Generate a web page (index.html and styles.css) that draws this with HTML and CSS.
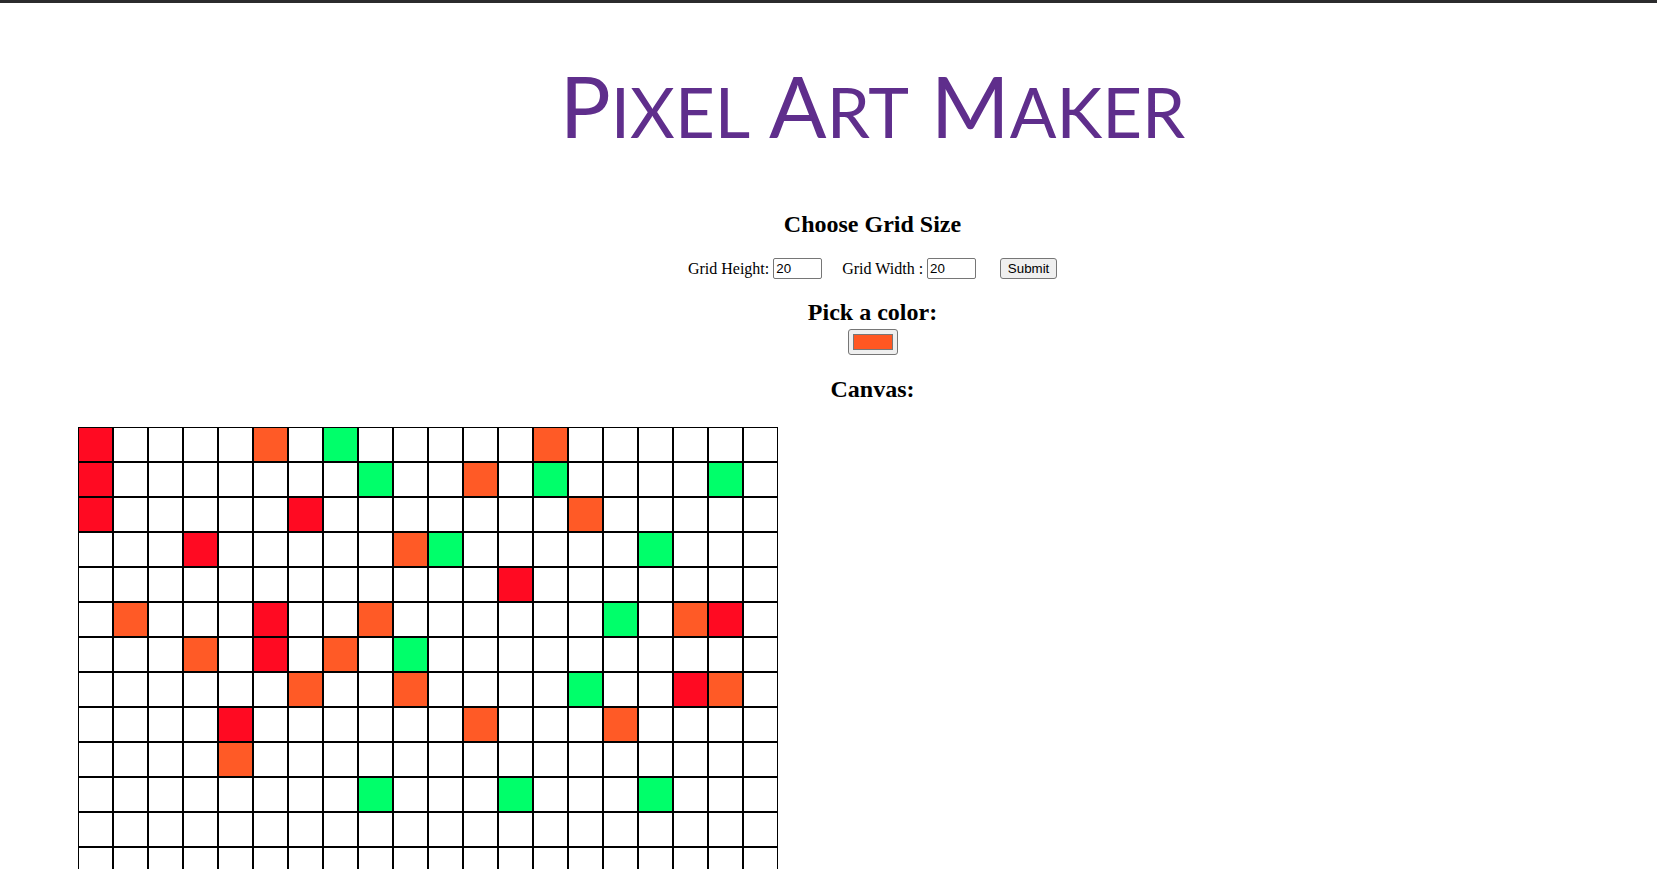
FILE: index.html
```html
<!DOCTYPE html>
<html lang="en">
<head>
<meta charset="utf-8">
<title>Pixel Art Maker!</title>
<link rel="stylesheet" href="styles.css">
</head>
<body>
<div class="topbar"></div>
<div class="header">
  <h1 class="title"><span class="cap">P</span><span class="sc">ixel</span> <span class="cap">A</span><span class="sc">rt</span> <span class="cap">M</span><span class="sc">aker</span></h1>
  <h2 class="h-choose">Choose Grid Size</h2>
  <form class="size-form">
    <label class="lbl" for="inputHeight">Grid Height:</label>
    <input class="num" type="number" id="inputHeight" value="20">
    <label class="lbl lbl-2" for="inputWidth">Grid Width :</label>
    <input class="num" type="number" id="inputWidth" value="20">
    <button class="submit" type="button">Submit</button>
  </form>
  <h2 class="h-pick">Pick a color:</h2>
  <input class="color" type="color" value="#ff5722">
  <h2 class="h-canvas">Canvas:</h2>
</div>
<table class="canvas">
<tr><td class="r"></td><td></td><td></td><td></td><td></td><td class="o"></td><td></td><td class="g"></td><td></td><td></td><td></td><td></td><td></td><td class="o"></td><td></td><td></td><td></td><td></td><td></td><td></td></tr>
<tr><td class="r"></td><td></td><td></td><td></td><td></td><td></td><td></td><td></td><td class="g"></td><td></td><td></td><td class="o"></td><td></td><td class="g"></td><td></td><td></td><td></td><td></td><td class="g"></td><td></td></tr>
<tr><td class="r"></td><td></td><td></td><td></td><td></td><td></td><td class="r"></td><td></td><td></td><td></td><td></td><td></td><td></td><td></td><td class="o"></td><td></td><td></td><td></td><td></td><td></td></tr>
<tr><td></td><td></td><td></td><td class="r"></td><td></td><td></td><td></td><td></td><td></td><td class="o"></td><td class="g"></td><td></td><td></td><td></td><td></td><td></td><td class="g"></td><td></td><td></td><td></td></tr>
<tr><td></td><td></td><td></td><td></td><td></td><td></td><td></td><td></td><td></td><td></td><td></td><td></td><td class="r"></td><td></td><td></td><td></td><td></td><td></td><td></td><td></td></tr>
<tr><td></td><td class="o"></td><td></td><td></td><td></td><td class="r"></td><td></td><td></td><td class="o"></td><td></td><td></td><td></td><td></td><td></td><td></td><td class="g"></td><td></td><td class="o"></td><td class="r"></td><td></td></tr>
<tr><td></td><td></td><td></td><td class="o"></td><td></td><td class="r"></td><td></td><td class="o"></td><td></td><td class="g"></td><td></td><td></td><td></td><td></td><td></td><td></td><td></td><td></td><td></td><td></td></tr>
<tr><td></td><td></td><td></td><td></td><td></td><td></td><td class="o"></td><td></td><td></td><td class="o"></td><td></td><td></td><td></td><td></td><td class="g"></td><td></td><td></td><td class="r"></td><td class="o"></td><td></td></tr>
<tr><td></td><td></td><td></td><td></td><td class="r"></td><td></td><td></td><td></td><td></td><td></td><td></td><td class="o"></td><td></td><td></td><td></td><td class="o"></td><td></td><td></td><td></td><td></td></tr>
<tr><td></td><td></td><td></td><td></td><td class="o"></td><td></td><td></td><td></td><td></td><td></td><td></td><td></td><td></td><td></td><td></td><td></td><td></td><td></td><td></td><td></td></tr>
<tr><td></td><td></td><td></td><td></td><td></td><td></td><td></td><td></td><td class="g"></td><td></td><td></td><td></td><td class="g"></td><td></td><td></td><td></td><td class="g"></td><td></td><td></td><td></td></tr>
<tr><td></td><td></td><td></td><td></td><td></td><td></td><td></td><td></td><td></td><td></td><td></td><td></td><td></td><td></td><td></td><td></td><td></td><td></td><td></td><td></td></tr>
<tr><td></td><td></td><td></td><td></td><td></td><td></td><td></td><td></td><td></td><td></td><td></td><td></td><td></td><td></td><td></td><td></td><td></td><td></td><td></td><td></td></tr>
<tr><td></td><td></td><td></td><td></td><td></td><td></td><td></td><td></td><td></td><td></td><td></td><td></td><td></td><td></td><td></td><td></td><td></td><td></td><td></td><td></td></tr>
<tr><td></td><td></td><td></td><td></td><td></td><td></td><td></td><td></td><td></td><td></td><td></td><td></td><td></td><td></td><td></td><td></td><td></td><td></td><td></td><td></td></tr>
<tr><td></td><td></td><td></td><td></td><td></td><td></td><td></td><td></td><td></td><td></td><td></td><td></td><td></td><td></td><td></td><td></td><td></td><td></td><td></td><td></td></tr>
<tr><td></td><td></td><td></td><td></td><td></td><td></td><td></td><td></td><td></td><td></td><td></td><td></td><td></td><td></td><td></td><td></td><td></td><td></td><td></td><td></td></tr>
<tr><td></td><td></td><td></td><td></td><td></td><td></td><td></td><td></td><td></td><td></td><td></td><td></td><td></td><td></td><td></td><td></td><td></td><td></td><td></td><td></td></tr>
<tr><td></td><td></td><td></td><td></td><td></td><td></td><td></td><td></td><td></td><td></td><td></td><td></td><td></td><td></td><td></td><td></td><td></td><td></td><td></td><td></td></tr>
<tr><td></td><td></td><td></td><td></td><td></td><td></td><td></td><td></td><td></td><td></td><td></td><td></td><td></td><td></td><td></td><td></td><td></td><td></td><td></td><td></td></tr>
</table>
</body>
</html>
```
FILE: styles.css
```css
html {
  scrollbar-width: none;
}
html::-webkit-scrollbar {
  display: none;
}
body {
  margin: 0;
  background: #ffffff;
  font-family: "Liberation Serif", "Times New Roman", serif;
  color: #000;
}
.topbar {
  height: 3px;
  background: #2b2b2d;
}
.header {
  padding-left: 88px;
  text-align: center;
}
.title {
  margin: 60px 0 0;
  font-family: Lato, "Noto Sans", sans-serif;
  font-weight: 400;
  font-size: 85px;
  line-height: 1;
  color: #5f2e8c;
  text-transform: uppercase;
  letter-spacing: 0;
  white-space: nowrap;
}
.title .sc {
  font-size: 69px;
}
h2 {
  margin: 0;
  font-size: 24px;
  font-weight: 700;
  line-height: 28px;
}
.h-choose {
  margin-top: 62px;
}
.size-form {
  margin: 20px 0 0;
  height: 21px;
  display: flex;
  justify-content: center;
  align-items: center;
}
.lbl {
  font-size: 16px;
  line-height: 19px;
  margin-right: 4px;
  margin-bottom: 1px;
}
.lbl-2 {
  margin-left: 20px;
}
.num {
  box-sizing: border-box;
  width: 49px;
  height: 21px;
  margin: 0;
  padding: 1px 2px;
  border: 1px solid #767676;
  border-radius: 2px;
  font-family: "Liberation Sans", Arial, sans-serif;
  font-size: 13.33px;
  background: #fff;
  -moz-appearance: textfield;
}
.num::-webkit-inner-spin-button,
.num::-webkit-outer-spin-button {
  -webkit-appearance: none;
  margin: 0;
}
.submit {
  box-sizing: border-box;
  width: 57px;
  height: 21px;
  margin: 0 0 0 24px;
  padding: 1px 6px;
  border: 1px solid #767676;
  border-radius: 3px;
  background: #efefef;
  font-family: "Liberation Sans", Arial, sans-serif;
  font-size: 13.33px;
  color: #000;
}
.h-pick {
  margin-top: 19px;
}
.color {
  display: block;
  box-sizing: border-box;
  width: 50px;
  height: 26px;
  margin: 3px auto 0;
  padding: 0;
  border: 1px solid #767676;
  border-radius: 3px;
  background: #efefef;
  -webkit-appearance: none;
  appearance: none;
}
.color::-webkit-color-swatch-wrapper {
  padding: 4px 4px;
}
.color::-webkit-color-swatch {
  border: 1px solid #777;
  border-radius: 0;
}
.h-canvas {
  margin-top: 20px;
}
.canvas {
  margin: 24px 0 0 78px;
  border-collapse: separate;
  border-spacing: 0;
}
.canvas td {
  width: 33px;
  height: 33px;
  padding: 0;
  border: 1px solid #000;
  background: #fff;
}
.canvas td.r {
  background: #ff0a22;
}
.canvas td.o {
  background: #ff5a26;
}
.canvas td.g {
  background: #00ff6a;
}
```
